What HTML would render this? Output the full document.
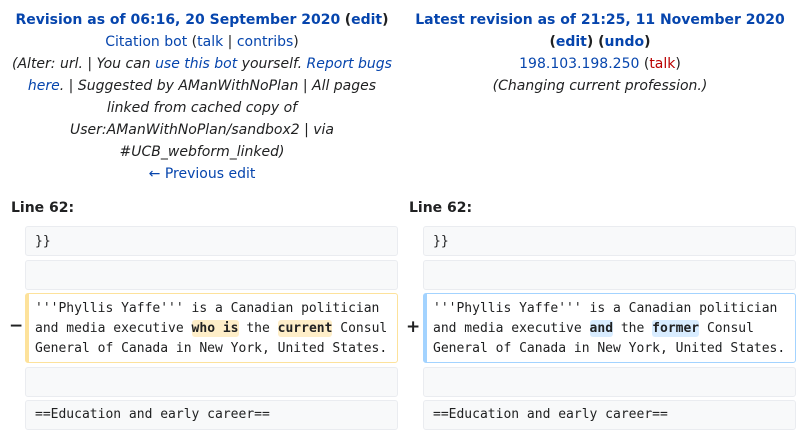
<!DOCTYPE html>
<html><head><meta charset="utf-8"><style>
*{margin:0;padding:0;box-sizing:border-box}
body{width:799px;height:434px;background:#fff;font-family:"DejaVu Sans","Liberation Sans",sans-serif;font-size:14px;color:#202122;position:relative;overflow:hidden}
a{color:#0645ad;text-decoration:none}
.red{color:#ba0000}
.hd{position:absolute;top:9px;text-align:center;line-height:22px}
.hd b{font-weight:bold}
i{font-style:italic}
.ln{position:absolute;top:197px;font-weight:bold;line-height:22px}
.box{position:absolute;background:#f8f9fa;border:1px solid #eaecf0;border-radius:3px;font-family:"DejaVu Sans Mono","Liberation Mono",monospace;font-size:13px;line-height:20px;padding:3px 9px;color:#202122}
.del{background:#fff;border:1px solid #fde29b;border-left:4px solid #fde29b;padding-left:6px;padding-top:5px}
.add{background:#fff;border:1px solid #a3d3ff;border-left:4px solid #a3d3ff;padding-left:6px;padding-top:5px}
.hl{font-weight:bold;border-radius:3px;padding:1px 0}
.hy{background:#feeec8}.hb{background:#d8ecff}
.sign{position:absolute;font-weight:bold;font-size:17px}
</style></head><body>
<div class="hd" style="left:12px;width:380px">
<b><a>Revision as of 06:16, 20 September 2020</a></b> <b>(<a>edit</a>)</b><br>
<a>Citation bot</a> (<a>talk</a> | <a>contribs</a>)<br>
<i>(Alter: url. | You can <a>use this bot</a> yourself. <a>Report bugs here</a>. | Suggested by AManWithNoPlan | All pages linked from cached copy of User:AManWithNoPlan/sandbox2 | via #UCB_webform_linked)</i><br>
<a>← Previous edit</a>
</div>
<div class="hd" style="left:398px;width:404px">
<b><a>Latest revision as of 21:25, 11 November 2020</a></b><br>
<b>(<a>edit</a>) (<a>undo</a>)</b><br>
<a>198.103.198.250</a> (<a class="red">talk</a>)<br>
<i>(Changing current profession.)</i>
</div>
<div class="ln" style="left:11px">Line 62:</div>
<div class="ln" style="left:409px">Line 62:</div>

<div class="box" style="left:25px;top:226px;width:373px;height:30px;padding-top:5px">}}</div>
<div class="box" style="left:25px;top:260px;width:373px;height:30px"></div>
<div class="sign" style="left:9px;top:316px">−</div>
<div class="box del" style="left:25px;top:293px;width:373px;height:70px">'''Phyllis Yaffe''' is a Canadian politician and media executive <span class="hl hy">who is</span> the <span class="hl hy">current</span> Consul General of Canada in New York, United States.</div>
<div class="box" style="left:25px;top:367px;width:373px;height:30px"></div>
<div class="box" style="left:25px;top:400px;width:373px;height:30px;padding-top:4px">==Education and early career==</div>

<div class="box" style="left:423px;top:226px;width:373px;height:30px;padding-top:5px">}}</div>
<div class="box" style="left:423px;top:260px;width:373px;height:30px"></div>
<div class="sign" style="left:406px;top:317px">+</div>
<div class="box add" style="left:423px;top:293px;width:373px;height:70px">'''Phyllis Yaffe''' is a Canadian politician and media executive <span class="hl hb">and</span> the <span class="hl hb">former</span> Consul General of Canada in New York, United States.</div>
<div class="box" style="left:423px;top:367px;width:373px;height:30px"></div>
<div class="box" style="left:423px;top:400px;width:373px;height:30px;padding-top:4px">==Education and early career==</div>
</body></html>
